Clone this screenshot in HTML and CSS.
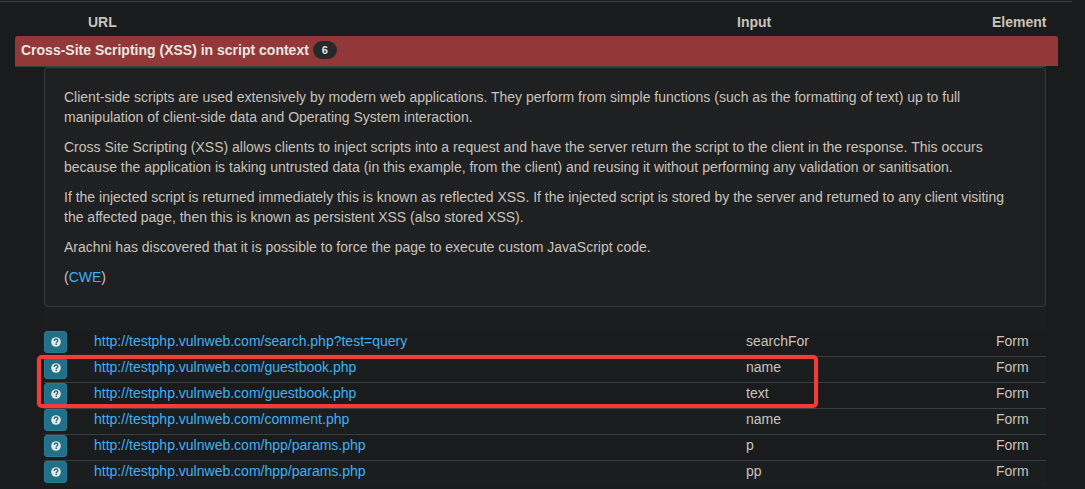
FILE: index.html
```
<!DOCTYPE html>
<html lang="en">
<head>
<meta charset="utf-8">
<title>Scan report</title>
<link rel="stylesheet" href="styles.css">
</head>
<body>
<svg class="sprite" aria-hidden="true">
  <symbol id="question" viewBox="0 0 12 12">
    <circle cx="6" cy="6" r="4.8" fill="#e8e6e3"/>
    <path d="M4.3 4.9C4.3 3.5 5 3 6 3S7.8 3.6 7.8 4.6C7.8 5.7 6.3 5.7 6.3 7" fill="none" stroke="#20708a" stroke-width="1.4"/>
    <path d="M5.5 7.6h1.5v1.4H5.5z" fill="#20708a"/>
  </symbol>
</svg>
<main class="report">
  <div class="heads">
    <strong>URL</strong>
    <strong>Input</strong>
    <strong>Element</strong>
  </div>
  <section class="group">
    <h4 class="banner">Cross-Site Scripting (XSS) in script context <span class="badge">6</span></h4>
    <div class="group-body">
      <div class="inner">
        <div class="well">
          <p>Client-side scripts are used extensively by modern web applications. They perform from simple functions (such as the formatting of text) up to full manipulation of client-side data and Operating System interaction.</p>
          <p>Cross Site Scripting (XSS) allows clients to inject scripts into a request and have the server return the script to the client in the response. This occurs because the application is taking untrusted data (in this example, from the client) and reusing it without performing any validation or sanitisation.</p>
          <p>If the injected script is returned immediately this is known as reflected XSS. If the injected script is stored by the server and returned to any client visiting the affected page, then this is known as persistent XSS (also stored XSS).</p>
          <p>Arachni has discovered that it is possible to force the page to execute custom JavaScript code.</p>
          <p>(<a href="#cwe">CWE</a>)</p>
        </div>
      </div>
      <div class="issues">
        <table>
          <colgroup><col class="col-info"><col><col class="col-input"><col class="col-element"></colgroup>
          <tbody>
            <tr><td><button class="info" type="button" aria-label="Details"><svg><use href="#question"/></svg></button></td><td><a href="#issue-1">http://testphp.vulnweb.com/search.php?test=query</a></td><td>searchFor</td><td>Form</td></tr>
            <tr><td><button class="info" type="button" aria-label="Details"><svg><use href="#question"/></svg></button></td><td><a href="#issue-2">http://testphp.vulnweb.com/guestbook.php</a></td><td>name</td><td>Form</td></tr>
            <tr><td><button class="info" type="button" aria-label="Details"><svg><use href="#question"/></svg></button></td><td><a href="#issue-3">http://testphp.vulnweb.com/guestbook.php</a></td><td>text</td><td>Form</td></tr>
            <tr><td><button class="info" type="button" aria-label="Details"><svg><use href="#question"/></svg></button></td><td><a href="#issue-4">http://testphp.vulnweb.com/comment.php</a></td><td>name</td><td>Form</td></tr>
            <tr><td><button class="info" type="button" aria-label="Details"><svg><use href="#question"/></svg></button></td><td><a href="#issue-5">http://testphp.vulnweb.com/hpp/params.php</a></td><td>p</td><td>Form</td></tr>
            <tr><td><button class="info" type="button" aria-label="Details"><svg><use href="#question"/></svg></button></td><td><a href="#issue-6">http://testphp.vulnweb.com/hpp/params.php</a></td><td>pp</td><td>Form</td></tr>
          </tbody>
        </table>
        <div class="marker"></div>
      </div>
    </div>
  </section>
</main>
</body>
</html>
```
FILE: styles.css
```
* { box-sizing: border-box; }
body {
  margin: 0;
  padding-top: 1px;
  background: #1a1b1c;
  color: #c8c3bc;
  font: 14px/20px "Liberation Sans", Arial, sans-serif;
}
a { color: #3db2f5; text-decoration: none; }
.sprite { display: none; }
.report {
  margin-right: 13px;
  padding: 0 14px 0 15px;
  border-top: 1px solid #3b3e40;
}
.heads {
  display: grid;
  grid-template-columns: 1fr 255px 66px;
  padding: 10px 0 4px 73px;
}
.banner {
  display: flex;
  align-items: center;
  gap: 4px;
  margin: 0;
  padding: 4px 6px 6px;
  border-radius: 3px 3px 0 0;
  background: #923838;
  color: #e8e6e3;
  font-size: 14px;
  line-height: 20px;
}
.badge {
  padding: 4px 9px 3px;
  border-radius: 10px;
  background: #26292a;
  font-size: 11px;
  line-height: 11px;
}
.group-body {
  margin-right: 12px;
  padding-left: 29px;
  border-top: 1px solid #3b3e40;
}
.inner {
  padding-bottom: 23px;
  background: #1b1e1f;
}
.well {
  padding: 19px 19px 9px;
  border: 1px solid #363a3c;
  border-radius: 4px;
  background: #1f2021;
}
.well p { margin: 0 0 10px; }
.issues { position: relative; }
table {
  width: 100%;
  table-layout: fixed;
  border-collapse: separate;
  border-spacing: 0;
}
.col-info { width: 50px; }
.col-input { width: 250px; }
.col-element { width: 50px; }
td {
  height: 26px;
  padding: 0;
  border-top: 1px solid #3b3e40;
  vertical-align: top;
}
tr:first-child td { border-top-color: transparent; }
tr:nth-child(even) { background: #1b1e1f; }
.info {
  display: flex;
  align-items: center;
  justify-content: center;
  width: 23px;
  height: 22px;
  margin: 0;
  padding: 0;
  border: 1px solid #2a7b91;
  border-radius: 3px;
  background: #20708a;
}
.info svg { width: 12px; height: 12px; }
.marker {
  position: absolute;
  top: 25px;
  right: 228px;
  left: -7px;
  height: 53px;
  border: 4px solid #f23c3c;
  border-radius: 5px;
  box-shadow: 0 0 1px #f23c3c;
  pointer-events: none;
}
```
